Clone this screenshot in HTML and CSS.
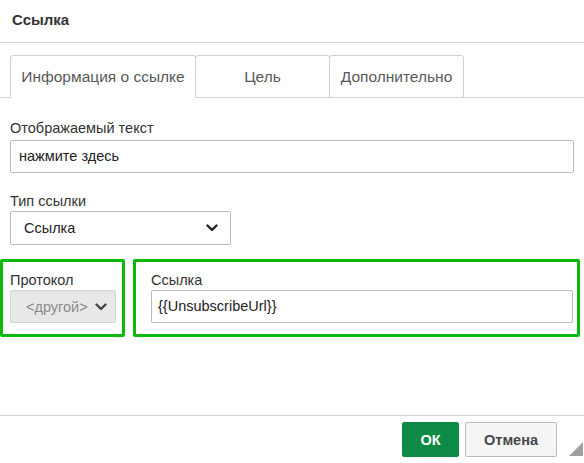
FILE: index.html
```html
<!DOCTYPE html>
<html lang="ru">
<head>
<meta charset="utf-8">
<title>Ссылка</title>
<link rel="stylesheet" href="styles.css">
</head>
<body>
<div class="dialog">
  <div class="header">Ссылка</div>
  <div class="tabs">
    <div class="tab active">Информация о ссылке</div>
    <div class="tab">Цель</div>
    <div class="tab">Дополнительно</div>
  </div>
  <div class="content">
    <div class="label first">Отображаемый текст</div>
    <div class="input">нажмите здесь</div>
    <div class="label tight">Тип ссылки</div>
    <div class="select type-select">
      <span>Ссылка</span>
      <svg class="chev" width="12" height="8" viewBox="0 0 12 8"><path d="M1.5 1.5 L6 6 L10.5 1.5" fill="none" stroke="#222" stroke-width="2.4" stroke-linecap="round" stroke-linejoin="round"/></svg>
    </div>
    <div class="url-row">
      <div class="hl protocol">
        <div class="label inbox">Протокол</div>
        <div class="select disabled">
          <span>&lt;другой&gt;</span>
          <svg class="chev" width="12" height="8" viewBox="0 0 12 8"><path d="M1.5 1.5 L6 6 L10.5 1.5" fill="none" stroke="#444" stroke-width="2.4" stroke-linecap="round" stroke-linejoin="round"/></svg>
        </div>
      </div>
      <div class="hl link">
        <div class="label inbox">Ссылка</div>
        <div class="input url">{{UnsubscribeUrl}}</div>
      </div>
    </div>
  </div>
  <div class="footer">
    <button class="btn ok">ОК</button>
    <button class="btn cancel">Отмена</button>
  </div>
  <div class="resizer"></div>
</div>
</body>
</html>
```
FILE: styles.css
```css
* { box-sizing: border-box; }
html, body { margin: 0; padding: 0; background: #fff; }
body {
  font-family: "Liberation Sans", Arial, sans-serif;
  font-size: 14.5px;
  color: #333;
}
.dialog {
  position: relative;
  width: 584px;
  height: 463px;
  display: flex;
  flex-direction: column;
  overflow: hidden;
}
.header {
  height: 43px;
  padding-left: 12px;
  line-height: 40px;
  font-size: 15px;
  font-weight: bold;
  color: #333;
  border-bottom: 1px solid #d1d1d1;
}
.tabs {
  display: flex;
  padding: 12px 10px 0;
  border-bottom: 1px solid #d1d1d1;
}
.tab {
  height: 43px;
  margin-bottom: -1px;
  padding: 0 10px;
  min-width: 135px;
  border: 1px solid #d1d1d1;
  border-radius: 3px 3px 0 0;
  text-align: center;
  line-height: 41px;
  font-size: 15.5px;
  color: #595959;
  background: #fff;
}
.tab.active { min-width: 186px; }
.tab + .tab { margin-left: -1px; }
.tab.active { border-bottom-color: #fff; }
.content {
  flex: 1;
  padding: 21px 10px 0;
}
.label {
  line-height: 18px;
  margin-bottom: 3px;
  color: #333;
}
.label.tight { margin-bottom: 1px; }
.input + .label { margin-top: 19px; }
.input {
  height: 33px;
  border: 1px solid #bcbcbc;
  border-radius: 2px;
  padding: 0 8px;
  line-height: 31px;
  color: #222;
  background: #fff;
}
.select {
  height: 34px;
  border: 1px solid #bcbcbc;
  border-radius: 2px;
  padding: 0 12px 0 13px;
  display: flex;
  align-items: center;
  justify-content: space-between;
  color: #222;
  background: #fff;
}
.type-select { width: 221px; }
.chev { display: block; flex: none; }
.url-row {
  display: flex;
  gap: 8px;
  margin: 14px -6px 0 -10px;
}
.hl {
  border: 3px solid #0cb80c;
  border-radius: 2px;
  height: 78px;
}
.protocol {
  width: 125px;
  padding: 9px 6px 0 7px;
}
.link {
  flex: 1;
  padding: 9px 4px 0 15px;
}
.label.inbox { margin-bottom: 1px; }
.select.disabled {
  height: 33px;
  background: #e8e8e8;
  border-color: #d4d4d4;
  color: #8a8a8a;
  padding: 0 8px 0 15px;
}
.input.url { padding: 0 6px; }
.footer {
  height: 48px;
  border-top: 1px solid #d1d1d1;
  display: flex;
  justify-content: flex-end;
  align-items: flex-start;
  gap: 6px;
  padding: 6px 27px 0 0;
}
.btn {
  height: 35px;
  font-family: "Liberation Sans", Arial, sans-serif;
  font-size: 14.5px;
  font-weight: bold;
  border-radius: 2px;
  cursor: pointer;
}
.ok {
  width: 57px;
  background: #0d8a45;
  border: 1px solid #0d8a45;
  color: #fff;
}
.cancel {
  width: 92px;
  background: #f5f5f5;
  border: 1px solid #bcbcbc;
  color: #484848;
}
.resizer {
  position: absolute;
  right: 1px;
  bottom: 7px;
  width: 0;
  height: 0;
  border-style: solid;
  border-width: 0 0 14px 14px;
  border-color: transparent transparent #a0a0a0 transparent;
}
```
